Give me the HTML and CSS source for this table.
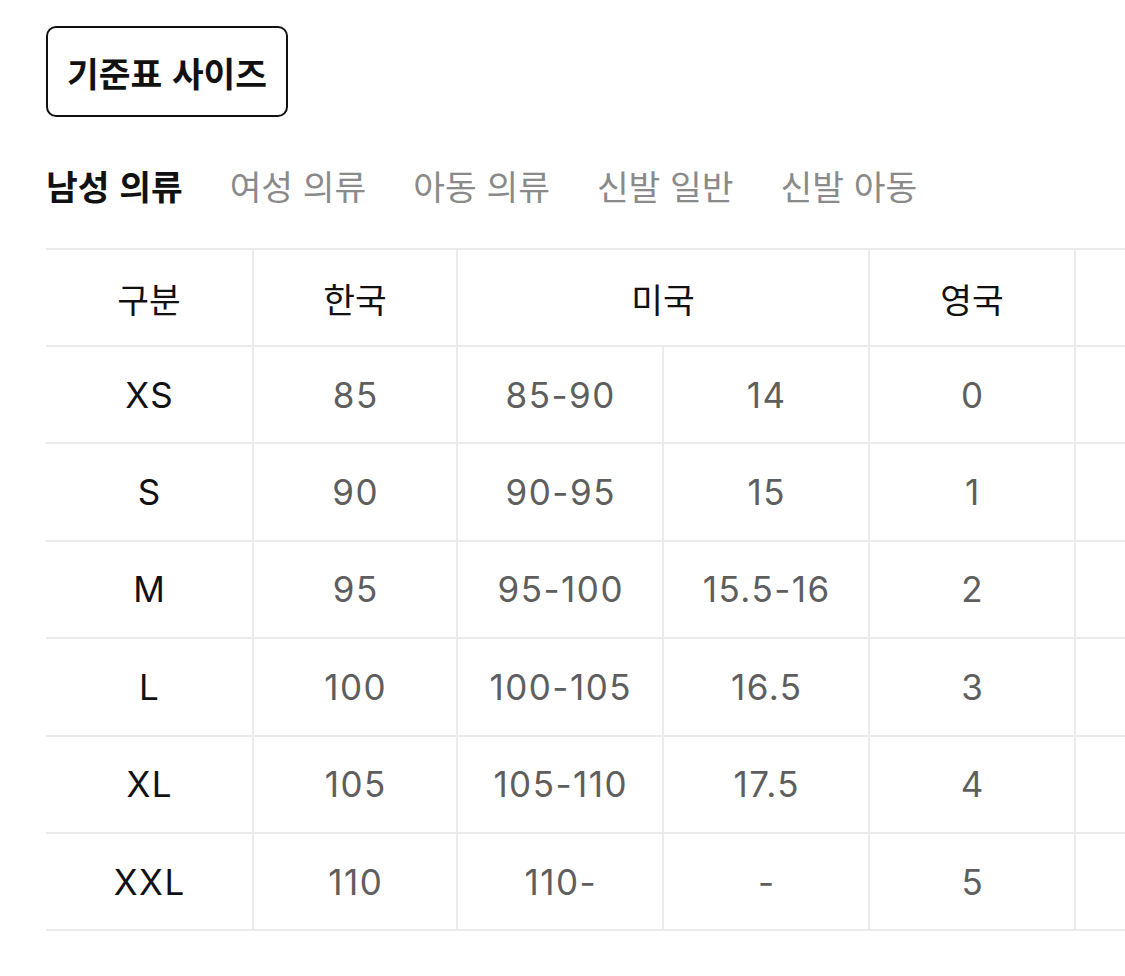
FILE: index.html
```html
<!DOCTYPE html>
<html lang="ko">
<head>
<meta charset="utf-8">
<title>기준표 사이즈</title>
<link rel="stylesheet" href="styles.css">
</head>
<body>
<div class="page">
  <button class="std-btn" type="button">기준표 사이즈</button>
  <nav class="tabs">
    <span class="tab active">남성 의류</span>
    <span class="tab">여성 의류</span>
    <span class="tab">아동 의류</span>
    <span class="tab">신발 일반</span>
    <span class="tab">신발 아동</span>
  </nav>
  <div class="table-wrap">
    <table class="size-table">
      <colgroup>
        <col class="c1"><col class="c2"><col class="c3"><col class="c4"><col class="c5"><col class="c6">
      </colgroup>
      <thead>
        <tr>
          <th>구분</th>
          <th>한국</th>
          <th colspan="2">미국</th>
          <th>영국</th>
          <th></th>
        </tr>
      </thead>
      <tbody>
        <tr><td class="label">XS</td><td>85</td><td>85-90</td><td>14</td><td>0</td><td></td></tr>
        <tr><td class="label">S</td><td>90</td><td>90-95</td><td>15</td><td>1</td><td></td></tr>
        <tr><td class="label">M</td><td>95</td><td>95-100</td><td>15.5-16</td><td>2</td><td></td></tr>
        <tr><td class="label">L</td><td>100</td><td>100-105</td><td>16.5</td><td>3</td><td></td></tr>
        <tr><td class="label">XL</td><td>105</td><td>105-110</td><td>17.5</td><td>4</td><td></td></tr>
        <tr><td class="label">XXL</td><td>110</td><td>110-</td><td>-</td><td>5</td><td></td></tr>
      </tbody>
    </table>
  </div>
</div>
</body>
</html>
```

FILE: styles.css
```css
* { box-sizing: border-box; }

html, body {
  margin: 0;
  padding: 0;
  background: #ffffff;
}

body {
  font-family: Inter, "Noto Sans CJK KR", sans-serif;
  color: #111111;
  overflow: hidden;
}

.page {
  padding: 26px 0 0 46px;
}

.std-btn {
  display: block;
  height: 91px;
  padding: 0 19px;
  border: 2px solid #111111;
  border-radius: 10px;
  background: #ffffff;
  font-family: "Noto Sans CJK KR", sans-serif;
  font-size: 34.5px;
  font-weight: 700;
  color: #111111;
}

.tabs {
  display: flex;
  gap: 47px;
  margin-top: 45px;
  height: 46px;
  align-items: center;
}

.tab {
  font-family: "Noto Sans CJK KR", sans-serif;
  font-size: 34.5px;
  line-height: 46px;
  color: #8a8a8a;
}

.tab.active {
  color: #111111;
  font-weight: 700;
}

.table-wrap {
  margin-top: 40px;
  overflow: hidden;
}

.size-table {
  border-collapse: separate;
  border-spacing: 0;
  table-layout: fixed;
  width: 1238px;
}

.c1 { width: 208px; }
.c2 { width: 204px; }
.c3 { width: 206px; }
.c4 { width: 206px; }
.c5 { width: 206px; }
.c6 { width: 208px; }

.size-table th,
.size-table td {
  border-right: 2px solid #ebebeb;
  border-bottom: 2px solid #ebebeb;
  text-align: center;
  vertical-align: middle;
  padding: 0;
}

.size-table th {
  border-top: 2px solid #ebebeb;
  height: 99px;
  font-family: "Noto Sans CJK KR", sans-serif;
  font-size: 34.5px;
  font-weight: 400;
  color: #111111;
}

.size-table td {
  height: 97.4px;
  padding-left: 1.5px;
  font-size: 35px;
  letter-spacing: 1.5px;
  color: #5e5e5e;
}

.size-table td.label {
  color: #111111;
}
```
